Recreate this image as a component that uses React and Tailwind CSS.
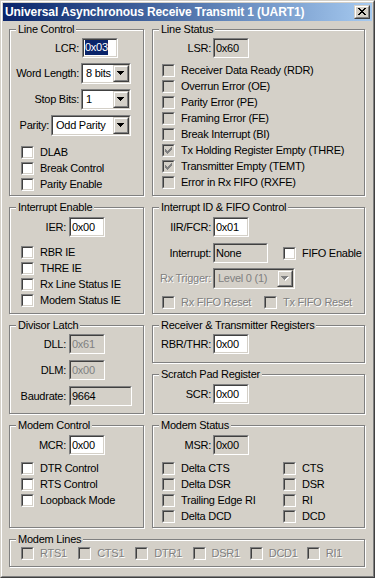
import React from "react";

const CHECK =
  "M6 0h1v1H6z M5 1h2v1H5z M0 2h1v1H0z M4 2h3v1H4z M0 3h2v1H0z M3 3h3v1H3z M0 4h5v1H0z M1 5h3v1H1z M2 6h1v1H2z";
const CROSS =
  "M0 0h2v1H0z M6 0h2v1H6z M1 1h2v1H1z M5 1h2v1H5z M2 2h4v1H2z M3 3h2v1H3z M2 4h4v1H2z M1 5h2v1H1z M5 5h2v1H5z M0 6h2v1H0z M6 6h2v1H6z";
const ARROW = "M0 0h7v1H0z M1 1h5v1H1z M2 2h3v1H2z M3 3h1v1H3z";

const dimText = "text-[#808080] [text-shadow:1px_1px_0_#fff]";

// group box with the etched win2k line
function GroupBox({ title, className, children }) {
  return (
    <fieldset
      className={`min-w-0 border border-[#808080] shadow-[inset_1px_1px_0_#fff,1px_1px_0_#fff] ${className}`}
    >
      <legend className="ml-[6px] bg-[#d4d0c8] px-[2px] leading-[13px]">{title}</legend>
      {children}
    </fieldset>
  );
}

function Edit({ value, w = "w-[36px]", kind = "white", selected, className = "" }) {
  const bg = kind === "white" ? "bg-white" : "bg-[#d4d0c8]";
  const color = kind === "disabled" ? "text-[#808080]" : "text-black";
  return (
    <div
      className={`h-[20px] shrink-0 ${w} border border-t-[#808080] border-l-[#808080] border-r-white border-b-white ${className}`}
    >
      <div
        className={`h-full overflow-hidden whitespace-nowrap border border-t-[#404040] border-l-[#404040] border-r-[#d4d0c8] border-b-[#d4d0c8] pl-px leading-[16px] ${bg} ${color}`}
      >
        {selected ? (
          <span className="inline-block bg-[#0a246a] align-top leading-[15px] text-white">{value}</span>
        ) : (
          value
        )}
      </div>
    </div>
  );
}

function Combo({ value, w, disabled, className = "" }) {
  return (
    <div
      className={`h-[21px] shrink-0 ${w} border border-t-[#808080] border-l-[#808080] border-r-white border-b-white ${className}`}
    >
      <div
        className={`flex h-full border border-t-[#404040] border-l-[#404040] border-r-[#d4d0c8] border-b-[#d4d0c8] ${
          disabled ? "bg-[#d4d0c8]" : "bg-white"
        }`}
      >
        <span
          className={`flex-1 overflow-hidden whitespace-nowrap pl-[3px] leading-[17px] ${
            disabled ? "text-[#808080]" : ""
          }`}
        >
          {value}
        </span>
        <div className="h-full w-[16px] border border-t-[#d4d0c8] border-l-[#d4d0c8] border-r-[#404040] border-b-[#404040]">
          <div className="flex h-full items-center justify-center border border-t-white border-l-white border-r-[#808080] border-b-[#808080] bg-[#d4d0c8]">
            <svg width="8" height="5" className="block" shapeRendering="crispEdges">
              {disabled && <path d={ARROW} fill="#fff" transform="translate(1 1)" />}
              <path d={ARROW} fill={disabled ? "#808080" : "#000"} />
            </svg>
          </div>
        </div>
      </div>
    </div>
  );
}

function Box({ checked, enabled }) {
  return (
    <div className="mt-[2px] h-[13px] w-[13px] shrink-0 border border-t-[#808080] border-l-[#808080] border-r-white border-b-white">
      <div
        className={`h-full border border-t-[#404040] border-l-[#404040] border-r-[#d4d0c8] border-b-[#d4d0c8] p-px ${
          enabled ? "bg-white" : "bg-[#d4d0c8]"
        }`}
      >
        {checked && (
          <svg width="7" height="7" className="block" shapeRendering="crispEdges">
            <path d={CHECK} fill={enabled ? "#000" : "#808080"} />
          </svg>
        )}
      </div>
    </div>
  );
}

function CheckRow({ label, checked, enabled, dim, className = "" }) {
  return (
    <div className={`flex h-[16px] ${className}`}>
      <Box checked={checked} enabled={enabled} />
      <span className={`ml-[6px] whitespace-nowrap leading-[16px] ${dim ? dimText : ""}`}>{label}</span>
    </div>
  );
}

function CloseBtn() {
  return (
    <div className="h-[14px] w-[16px] border border-t-[#d4d0c8] border-l-[#d4d0c8] border-r-[#404040] border-b-[#404040]">
      <div className="flex h-full justify-center border border-t-white border-l-white border-r-[#808080] border-b-[#808080] bg-[#d4d0c8] pt-[1px]">
        <svg width="8" height="7" className="block" shapeRendering="crispEdges">
          <path d={CROSS} fill="#000" />
        </svg>
      </div>
    </div>
  );
}

const lineStatus = [
  ["Receiver Data Ready (RDR)", false],
  ["Overrun Error (OE)", false],
  ["Parity Error (PE)", false],
  ["Framing Error (FE)", false],
  ["Break Interrupt (BI)", false],
  ["Tx Holding Register Empty (THRE)", true],
  ["Transmitter Empty (TEMT)", true],
  ["Error in Rx FIFO (RXFE)", false],
];

const modemStatus = ["Delta CTS", "CTS", "Delta DSR", "DSR", "Trailing Edge RI", "RI", "Delta DCD", "DCD"];
const modemLines = ["RTS1", "CTS1", "DTR1", "DSR1", "DCD1", "RI1"];

export default function App() {
  return (
    <div className="h-[578px] w-[375px] border border-t-[#d4d0c8] border-l-[#d4d0c8] border-r-[#404040] border-b-[#404040] bg-[#d4d0c8] font-['Liberation_Sans',Arial,sans-serif] text-[11px] tracking-[-0.25px] text-black">
      <div className="h-full border border-t-white border-l-white border-r-[#808080] border-b-[#808080] p-px">
        {/* title bar */}
        <div className="flex h-[18px] items-center justify-between bg-linear-to-r from-[#0a246a] to-[#a6caf0] px-[2px]">
          <span className="whitespace-nowrap text-[12px] font-bold leading-[18px] tracking-[-0.1px] text-white">
            Universal Asynchronous Receive Transmit 1 (UART1)
          </span>
          <CloseBtn />
        </div>

        <div className="flex flex-col gap-[5px] pl-[6px] pt-[2px]">
          {/* row 1 */}
          <div className="flex gap-[8px]">
            <GroupBox title="Line Control" className="h-[173px] w-[135px]">
              <div className="mt-[2px] flex h-[20px] items-center">
                <span className="w-[69px] shrink-0 text-right">LCR:</span>
                <Edit className="ml-[3px]" value="0x03" selected />
              </div>
              <div className="mt-[5px] flex h-[21px] items-center">
                <span className="w-[69px] shrink-0 text-right">Word Length:</span>
                <Combo className="ml-[2px]" w="w-[50px]" value="8 bits" />
              </div>
              <div className="mt-[5px] flex h-[21px] items-center">
                <span className="w-[69px] shrink-0 text-right">Stop Bits:</span>
                <Combo className="ml-[2px]" w="w-[50px]" value="1" />
              </div>
              <div className="mt-[5px] flex h-[21px] items-center">
                <span className="w-[39px] shrink-0 text-right">Parity:</span>
                <Combo className="ml-[2px]" w="w-[80px]" value="Odd Parity" />
              </div>
              <div className="ml-[11px] mt-[8px]">
                <CheckRow label="DLAB" enabled />
                <CheckRow label="Break Control" enabled />
                <CheckRow label="Parity Enable" enabled />
              </div>
            </GroupBox>

            <GroupBox title="Line Status" className="h-[173px] w-[213px]">
              <div className="mt-[2px] flex h-[20px] items-center">
                <span className="w-[58px] shrink-0 text-right">LSR:</span>
                <Edit className="ml-[2px]" value="0x60" kind="readonly" />
              </div>
              <div className="ml-[9px] mt-[4px]">
                {lineStatus.map(([label, checked]) => (
                  <CheckRow key={label} label={label} checked={checked} />
                ))}
              </div>
            </GroupBox>
          </div>

          {/* row 2 */}
          <div className="flex gap-[8px]">
            <GroupBox title="Interrupt Enable" className="h-[113px] w-[135px]">
              <div className="mt-[3px] flex h-[20px] items-center">
                <span className="w-[56px] shrink-0 text-right">IER:</span>
                <Edit className="ml-[3px]" value="0x00" />
              </div>
              <div className="ml-[11px] mt-[7px]">
                <CheckRow label="RBR IE" enabled />
                <CheckRow label="THRE IE" enabled />
                <CheckRow label="Rx Line Status IE" enabled />
                <CheckRow label="Modem Status IE" enabled />
              </div>
            </GroupBox>

            <GroupBox title="Interrupt ID & FIFO Control" className="h-[113px] w-[213px]">
              <div className="mt-[3px] flex h-[20px] items-center">
                <span className="w-[58px] shrink-0 text-right">IIR/FCR:</span>
                <Edit className="ml-[2px]" value="0x01" />
              </div>
              <div className="mt-[6px] flex h-[20px] items-center">
                <span className="w-[58px] shrink-0 text-right">Interrupt:</span>
                <Edit className="ml-[2px]" w="w-[55px]" value="None" kind="readonly" />
                <CheckRow className="ml-[15px]" label="FIFO Enable" enabled />
              </div>
              <div className="mt-[5px] flex h-[21px] items-center">
                <span className={`w-[58px] shrink-0 text-right ${dimText}`}>Rx Trigger:</span>
                <Combo className="ml-[2px]" w="w-[82px]" value="Level 0 (1)" disabled />
              </div>
              <div className="ml-[9px] mt-[5px] flex">
                <CheckRow className="w-[102px]" label="Rx FIFO Reset" dim />
                <CheckRow label="Tx FIFO Reset" dim />
              </div>
            </GroupBox>
          </div>

          {/* row 3 */}
          <div className="flex gap-[8px]">
            <GroupBox title="Divisor Latch" className="h-[95px] w-[135px]">
              <div className="mt-[2px] flex h-[20px] items-center">
                <span className="w-[56px] shrink-0 text-right">DLL:</span>
                <Edit className="ml-[3px]" value="0x61" kind="disabled" />
              </div>
              <div className="mt-[6px] flex h-[20px] items-center">
                <span className="w-[56px] shrink-0 text-right">DLM:</span>
                <Edit className="ml-[3px]" value="0x00" kind="disabled" />
              </div>
              <div className="mt-[6px] flex h-[20px] items-center">
                <span className="w-[56px] shrink-0 text-right">Baudrate:</span>
                <Edit className="ml-[3px]" w="w-[63px]" value="9664" kind="readonly" />
              </div>
            </GroupBox>

            <div className="flex flex-col gap-[5px]">
              <GroupBox title="Receiver & Transmitter Registers" className="h-[44px] w-[213px]">
                <div className="mt-[2px] flex h-[20px] items-center">
                  <span className="w-[58px] shrink-0 text-right">RBR/THR:</span>
                  <Edit className="ml-[2px]" value="0x00" />
                </div>
              </GroupBox>
              <GroupBox title="Scratch Pad Register" className="h-[46px] w-[213px]">
                <div className="mt-[3px] flex h-[20px] items-center">
                  <span className="w-[58px] shrink-0 text-right">SCR:</span>
                  <Edit className="ml-[2px]" value="0x00" />
                </div>
              </GroupBox>
            </div>
          </div>

          {/* row 4 */}
          <div className="flex gap-[8px]">
            <GroupBox title="Modem Control" className="h-[109px] w-[135px]">
              <div className="mt-[3px] flex h-[20px] items-center">
                <span className="w-[56px] shrink-0 text-right">MCR:</span>
                <Edit className="ml-[3px]" value="0x00" />
              </div>
              <div className="ml-[11px] mt-[5px]">
                <CheckRow label="DTR Control" enabled />
                <CheckRow label="RTS Control" enabled />
                <CheckRow label="Loopback Mode" enabled />
              </div>
            </GroupBox>

            <GroupBox title="Modem Status" className="h-[109px] w-[213px]">
              <div className="mt-[3px] flex h-[20px] items-center">
                <span className="w-[58px] shrink-0 text-right">MSR:</span>
                <Edit className="ml-[2px]" value="0x00" kind="readonly" />
              </div>
              <div className="ml-[9px] mt-[5px] grid grid-cols-[121px_auto]">
                {modemStatus.map((label) => (
                  <CheckRow key={label} label={label} />
                ))}
              </div>
            </GroupBox>
          </div>

          {/* row 5 */}
          <GroupBox title="Modem Lines" className="h-[34px] w-[356px]">
            <div className="ml-[11px] mt-[-1px] flex">
              {modemLines.map((label) => (
                <CheckRow key={label} className="w-[60px]" label={label} dim />
              ))}
            </div>
          </GroupBox>
        </div>
      </div>
    </div>
  );
}
